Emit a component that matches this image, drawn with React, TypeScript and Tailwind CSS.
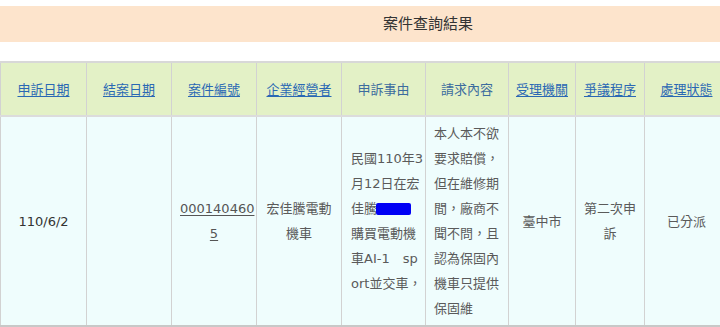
// 案件查詢結果：申訴案件列表
const FONT = "font-['DejaVu_Sans','Noto_Sans_CJK_TC',sans-serif]";

type Head = { label: string; link: boolean; width: string };

const heads: Head[] = [
  { label: "申訴日期", link: true, width: "w-[86px]" },
  { label: "結案日期", link: true, width: "w-[85px]" },
  { label: "案件編號", link: true, width: "w-[85px]" },
  { label: "企業經營者", link: true, width: "w-[85px]" },
  { label: "申訴事由", link: false, width: "w-[84px]" },
  { label: "請求內容", link: false, width: "w-[83px]" },
  { label: "受理機關", link: true, width: "w-[67px]" },
  { label: "爭議程序", link: true, width: "w-[69px]" },
  { label: "處理狀態", link: true, width: "w-[84px]" },
];

const request = [
  "本人本不欲",
  "要求賠償，",
  "但在維修期",
  "間，廠商不",
  "聞不問，且",
  "認為保固內",
  "機車只提供",
  "保固維",
];

const cell = "border border-[#d2d2d2] align-middle text-center px-2 whitespace-nowrap";

export default function App() {
  return (
    <div className={`${FONT} w-[720px] h-[327px] overflow-hidden bg-white`}>
      <div className="mt-[6px] h-[36px] bg-[#fde4cc] flex items-center pl-[383px]">
        <span className="text-[15px] text-[#333]">案件查詢結果</span>
      </div>

      <div className="mt-[19px] w-[720px] overflow-hidden">
        <table className="w-[728px] border-collapse table-fixed text-[13px] leading-[25px] border-b-2 border-b-[#c8c8c8]">
          <thead>
            <tr className="h-[54px] bg-[#e3f1c6] border-t-2 border-t-[#d8d8d8]">
              {heads.map((h) => (
                <th key={h.label} className={`${cell} ${h.width} !px-0 font-normal border-b-2 border-b-[#dcdcdc]`}>
                  {h.link ? (
                    <a className="text-[#2a68b4] underline underline-offset-2 cursor-pointer">{h.label}</a>
                  ) : (
                    <span className="text-[#3c6c9e]">{h.label}</span>
                  )}
                </th>
              ))}
            </tr>
          </thead>
          <tbody>
            <tr className="h-[208px] bg-[#effdfd] text-[#5a5a5a]">
              <td className={`${cell} text-[#333]`}>110/6/2</td>
              <td className={cell}></td>
              <td className={cell}>
                <a className="underline underline-offset-2 text-[#555] cursor-pointer">
                  000140460
                  <br />5
                </a>
              </td>
              <td className={cell}>
                宏佳騰電動
                <br />
                機車
              </td>
              <td className={`${cell} !text-left !pl-[9px] !pr-0`}>
                <div>民國110年3</div>
                <div>月12日在宏</div>
                <div className="flex items-center">
                  佳騰<span className="inline-block w-[35px] h-[12px] bg-[#0000f5] rounded-[2px] ml-[-1px]" />
                </div>
                <div>購買電動機</div>
                <div>車AI-1　sp</div>
                <div>ort並交車，</div>
              </td>
              <td className={`${cell} !text-left !pl-[8px] !pr-0 py-1`}>
                {request.map((line) => (
                  <div key={line}>{line}</div>
                ))}
              </td>
              <td className={cell}>臺中市</td>
              <td className={cell}>
                第二次申
                <br />
                訴
              </td>
              <td className={cell}>已分派</td>
            </tr>
          </tbody>
        </table>
      </div>
    </div>
  );
}
